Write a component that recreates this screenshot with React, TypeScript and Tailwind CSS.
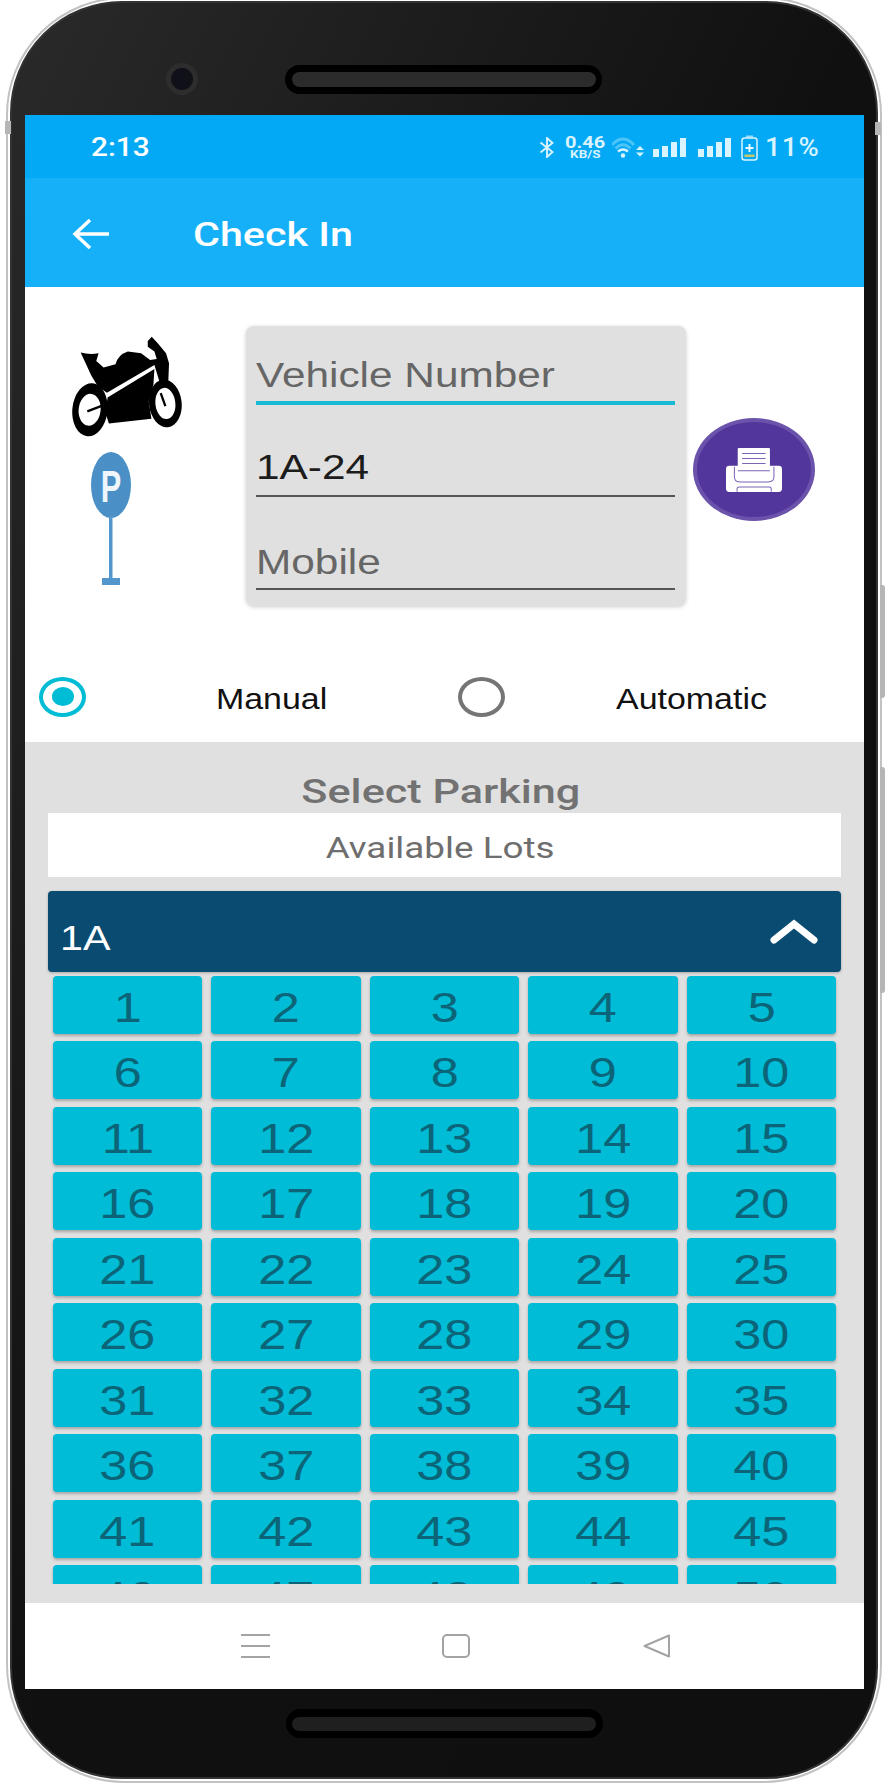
import React from 'react';

const lots = Array.from({ length: 50 }, (_, i) => i + 1);

const Wide: React.FC<{ className?: string; children: React.ReactNode }> = ({ className = '', children }) => (
  <span className={`inline-block whitespace-nowrap ${className}`}>{children}</span>
);

const StatusIcons: React.FC = () => (
  <div className="flex items-center text-[#d9f3ff]">
    <svg width="16" height="21" viewBox="0 0 16 21" fill="none" stroke="#d9f3ff" strokeWidth="1.9">
      <path d="M1.5 5.5 L13.5 15 L8 20 V1 L13.5 6 L1.5 15.5" />
    </svg>
    <div className="ml-[12px] flex w-[37px] flex-col items-center font-['Roboto',sans-serif] font-bold">
      <span className="text-[16px] leading-[15px] scale-x-[1.25]">0.46</span>
      <span className="text-[10px] leading-[10px] scale-x-[1.35]">KB/S</span>
    </div>
    <svg className="ml-[8px]" width="34" height="21" viewBox="0 0 34 21" fill="none">
      <path d="M0 8 Q11 -4 22 8" stroke="#4cc4f8" strokeWidth="3" />
      <path d="M3.5 11.5 Q11 4 18.5 11.5" stroke="#4cc4f8" strokeWidth="3" />
      <path d="M6 14.5 Q11 10.5 16 14.5" stroke="#d9f3ff" strokeWidth="2.4" />
      <circle cx="11" cy="18.5" r="2.2" fill="#d9f3ff" />
      <path d="M24 13 L28 9 L32 13 Z M24 15.5 L28 19.5 L32 15.5 Z" fill="#d9f3ff" />
    </svg>
    <svg className="ml-[7px]" width="34" height="20" viewBox="0 0 34 20" fill="#d9f3ff">
      <rect x="0" y="11" width="6" height="8" />
      <rect x="9" y="8" width="6" height="11" />
      <rect x="18" y="4" width="6" height="15" />
      <rect x="27" y="0" width="6" height="19" />
    </svg>
    <svg className="ml-[11px]" width="34" height="20" viewBox="0 0 34 20" fill="#d9f3ff">
      <rect x="0" y="11" width="6" height="8" />
      <rect x="9" y="8" width="6" height="11" />
      <rect x="18" y="4" width="6" height="15" />
      <rect x="27" y="0" width="6" height="19" />
    </svg>
    <svg className="ml-[9px]" width="17" height="26" viewBox="0 0 17 26" fill="none">
      <rect x="5" y="0.5" width="7" height="2" fill="#9adcf9" />
      <rect x="1" y="3" width="15" height="22" rx="2.5" stroke="#d9f3ff" strokeWidth="1.5" />
      <path d="M8.5 9 V17 M4.5 13 H12.5" stroke="#eafaff" strokeWidth="2" />
      <rect x="3.5" y="19.5" width="10" height="2.5" fill="#c9c86a" />
    </svg>
    <span className="ml-[7px] w-[54px] origin-left scale-x-[1.1] whitespace-nowrap font-['Roboto',sans-serif] text-[25px] font-medium leading-none tracking-[1px]">
      11%
    </span>
  </div>
);

const MotorcycleIcon: React.FC = () => (
  <svg width="112" height="103" viewBox="155 100 335 310" fill="#000">
    <ellipse cx="211" cy="325" rx="53" ry="80" transform="rotate(6 211 325)" />
    <ellipse cx="210" cy="325" rx="33" ry="48" transform="rotate(6 210 325)" fill="#fff" />
    <ellipse cx="438" cy="306" rx="49" ry="72" transform="rotate(-6 438 306)" />
    <ellipse cx="438" cy="306" rx="30" ry="47" transform="rotate(-6 438 306)" fill="#fff" />
    <path d="M203 330 L250 312 M424 275 L438 314" stroke="#000" strokeWidth="7" />
    <path d="M183 153 Q210 160 237 155 L230 178 L252 198 L288 188 Q295 160 325 150 L365 155 L392 175 L412 172 L405 150 L385 135 L385 118 L397 105 L415 125 L440 155 L449 185 L447 236 L420 240 L405 190 L262 274 L235 255 L215 222 Z" />
    <path d="M264 288 L405 202 L402 250 L388 300 L396 352 L268 366 L258 335 Z" />
  </svg>
);

const ParkingSignIcon: React.FC = () => (
  <svg width="40" height="134" viewBox="0 0 40 134">
    <ellipse cx="20" cy="33" rx="20" ry="33" fill="#4a90c6" />
    <rect x="18" y="64" width="3.5" height="64" fill="#5296cb" />
    <rect x="11" y="126" width="18" height="7" fill="#5296cb" />
    <text
      transform="translate(20 50) scale(0.7 1)"
      textAnchor="middle"
      fontFamily="'Liberation Sans', sans-serif"
      fontWeight="700"
      fontSize="44"
      fill="#eef6fb"
    >
      P
    </text>
  </svg>
);

const PrinterIcon: React.FC = () => (
  <svg width="56" height="44" viewBox="857 444 167 131">
    <rect x="857" y="497" width="167" height="78" rx="10" fill="#fff" />
    <rect x="892" y="444" width="96" height="68" rx="3" fill="#fff" />
    <path d="M905 460 H975 M905 475 H975 M905 490 H975" stroke="#7b64b5" strokeWidth="3" />
    <path d="M892 512 H988" stroke="#7b64b5" strokeWidth="3" />
    <path d="M882 500 V528 Q882 545 898 545 H983 Q1000 545 1000 528 V500" stroke="#7b64b5" strokeWidth="3" fill="none" />
    <path d="M890 574 V566 Q890 560 896 560 H986 Q992 560 992 566 V574" stroke="#7b64b5" strokeWidth="3" fill="none" />
  </svg>
);

const Radio: React.FC<{ checked?: boolean }> = ({ checked }) => (
  <span
    className={`flex h-[40px] w-[47px] shrink-0 items-center justify-center rounded-[50%] border-[4px] ${
      checked ? 'border-[#00bcd4]' : 'border-[#757575]'
    }`}
  >
    {checked && <span className="h-[19px] w-[22px] rounded-[50%] bg-[#00bcd4]" />}
  </span>
);

const Field: React.FC<{ className: string; textClass: string; label: string }> = ({ className, textClass, label }) => (
  <div className={`flex items-end ${className}`}>
    <span className={`origin-left whitespace-nowrap text-[35px] leading-[40px] scale-x-[1.21] ${textClass}`}>{label}</span>
  </div>
);

export default function App() {
  return (
    <div className="relative h-[1783px] w-[891px] overflow-hidden bg-white font-['Liberation_Sans',sans-serif]">
      {/* side buttons */}
      <div className="absolute left-[5px] top-[121px] h-[13px] w-[6px] bg-[#b5b5b5]" />
      <div className="absolute left-[875px] top-[122px] h-[13px] w-[6px] bg-[#b5b5b5]" />
      <div className="absolute left-[880px] top-[585px] h-[113px] w-[5px] rounded-r-[3px] bg-[#b5b5b5]" />
      <div className="absolute left-[880px] top-[767px] h-[226px] w-[5px] rounded-r-[3px] bg-[#b5b5b5]" />

      <div className="ml-[6px] mt-[-3px] h-[1786px] w-[876px] rounded-[118px] border-2 border-[#c2c2c2] bg-white p-[2px]">
        <div className="flex h-full flex-col rounded-[112px] border-2 border-[#333333] bg-gradient-to-br from-[#2a2a2a] via-[#101010] to-[#0f0f0f] px-[13px]">
          {/* top bezel */}
          <div className="flex h-[112px] shrink-0 items-start pl-[141px] pt-[60px]">
            <div className="flex h-[32px] w-[32px] items-center justify-center rounded-full bg-[#2d2d2d]">
              <div className="h-[22px] w-[22px] rounded-full bg-[#101018]" />
            </div>
            <div className="ml-[87px] mt-[2px] flex h-[29px] w-[317px] items-center justify-center rounded-full bg-black">
              <div className="h-[15px] w-[304px] rounded-full bg-[#2b2b2b]" />
            </div>
          </div>

          {/* screen */}
          <div className="flex h-[1574px] w-[839px] shrink-0 flex-col overflow-hidden bg-white">
            <div className="flex h-[63px] shrink-0 items-center justify-between bg-[#03a9f4] pl-[66px] pr-[45px] pt-[2px]">
              <span className="origin-left scale-x-[1.19] font-['Roboto',sans-serif] text-[25px] font-medium leading-none text-white">2:13</span>
              <StatusIcons />
            </div>

            <div className="flex h-[109px] shrink-0 items-center bg-[#16b0f8] pl-[47px] pt-[3px]">
              <svg width="37" height="30" viewBox="0 0 37 30" fill="none" stroke="#fff" strokeWidth="3.5">
                <path d="M37 15 H3 M18 1 L3 15 L18 29" />
              </svg>
              <span className="ml-[84px] origin-left scale-x-[1.25] whitespace-nowrap font-['Roboto',sans-serif] text-[33px] font-medium leading-none text-white">Check In</span>
            </div>

            <div className="h-[455px] shrink-0 bg-white">
              <div className="flex items-start pt-[39px]">
                <div className="flex w-[221px] shrink-0 flex-col items-start pl-[46px] pt-[9px]">
                  <MotorcycleIcon />
                  <div className="ml-[20px] mt-[14px]">
                    <ParkingSignIcon />
                  </div>
                </div>
                <div className="flex h-[280px] w-[440px] shrink-0 flex-col rounded-[8px] bg-[#e0e0e0] pl-[10px] pr-[11px] shadow-[0_1px_4px_rgba(0,0,0,0.2)]">
                  <Field className="h-[79px] border-b-4 border-[#17b9d4] pb-[6px]" textClass="text-[#666666]" label="Vehicle Number" />
                  <Field className="h-[92px] border-b-2 border-[#555555] pb-[8px]" textClass="text-[#1c1c1c]" label="1A-24" />
                  <Field className="h-[93px] border-b-2 border-[#555555] pb-[6px]" textClass="text-[#666666]" label="Mobile" />
                </div>
                <div className="ml-[7px] mt-[92px] flex h-[103px] w-[122px] shrink-0 items-center justify-center rounded-[50%] border-[4px] border-[#6b52ab] bg-[#52369b]">
                  <PrinterIcon />
                </div>
              </div>

              <div className="mt-[68px] flex items-center pl-[14px]">
                <Radio checked />
                <span className="w-[372px] pt-[5px] text-center text-[29px] leading-[40px] text-[#111111]">
                  <Wide className="scale-x-[1.17]">Manual</Wide>
                </span>
                <Radio />
                <span className="w-[359px] pl-[13px] pt-[5px] text-center text-[29px] leading-[40px] text-[#111111]">
                  <Wide className="scale-x-[1.17]">Automatic</Wide>
                </span>
              </div>
            </div>

            <div className="flex h-[861px] shrink-0 flex-col bg-[#e0e0e0] px-[23px]">
              <div className="flex h-[71px] shrink-0 items-end justify-center pb-[2px] pr-[8px]">
                <Wide className="scale-x-[1.27] font-['Roboto',sans-serif] text-[34px] font-medium leading-[40px] text-[#727272]">Select Parking</Wide>
              </div>
              <div className="flex h-[64px] shrink-0 items-center justify-center bg-white pr-[8px] pt-[6px]">
                <Wide className="scale-x-[1.27] font-['Roboto',sans-serif] text-[29px] font-normal leading-[40px] text-[#6e6e6e]">Available Lots</Wide>
              </div>
              <div className="mt-[14px] flex h-[81px] shrink-0 items-center justify-between rounded-[4px] bg-[#0a4b72] pl-[12px] pr-[23px] shadow-[0_1px_3px_rgba(0,0,0,0.25)]">
                <span className="origin-left scale-x-[1.18] pt-[12px] text-[35px] leading-[40px] text-white">1A</span>
                <svg width="48" height="26" viewBox="0 0 48 26" fill="none" stroke="#fff" strokeWidth="7" strokeLinecap="round" strokeLinejoin="miter">
                  <path d="M4 21 L24 5 L44 21" />
                </svg>
              </div>
              <div className="mt-[4px] h-[608px] shrink-0 overflow-hidden px-[5px]">
                <div className="grid grid-cols-5 gap-x-[9px] gap-y-[7.44px]">
                  {lots.map((n) => (
                    <div
                      key={n}
                      className="flex h-[58px] items-center justify-center rounded-[4px] bg-[#00bcd6] pt-[6px] text-[42px] leading-none text-[#0b6478] shadow-[0_2px_3px_rgba(0,0,0,0.25)]"
                    >
                      <span className="scale-x-[1.2]">{n}</span>
                    </div>
                  ))}
                </div>
              </div>
            </div>

            <div className="flex h-[86px] shrink-0 items-center bg-white pl-[216px]">
              <svg width="29" height="24" viewBox="0 0 29 24" stroke="#a3a3a3" strokeWidth="2">
                <path d="M0 1 H29 M0 12 H29 M0 23 H29" />
              </svg>
              <div className="ml-[172px] h-[24px] w-[28px] rounded-[5px] border-2 border-[#a3a3a3]" />
              <svg className="ml-[173px]" width="28" height="24" viewBox="0 0 28 24" fill="none" stroke="#a3a3a3" strokeWidth="2" strokeLinejoin="round">
                <path d="M26 1.5 V22.5 L1.5 12 Z" />
              </svg>
            </div>
          </div>

          {/* bottom bezel */}
          <div className="flex justify-center pt-[20px]">
            <div className="flex h-[29px] w-[317px] items-center justify-center rounded-full bg-black">
              <div className="h-[14px] w-[304px] rounded-full bg-[#1f1f1f]" />
            </div>
          </div>
        </div>
      </div>
    </div>
  );
}
